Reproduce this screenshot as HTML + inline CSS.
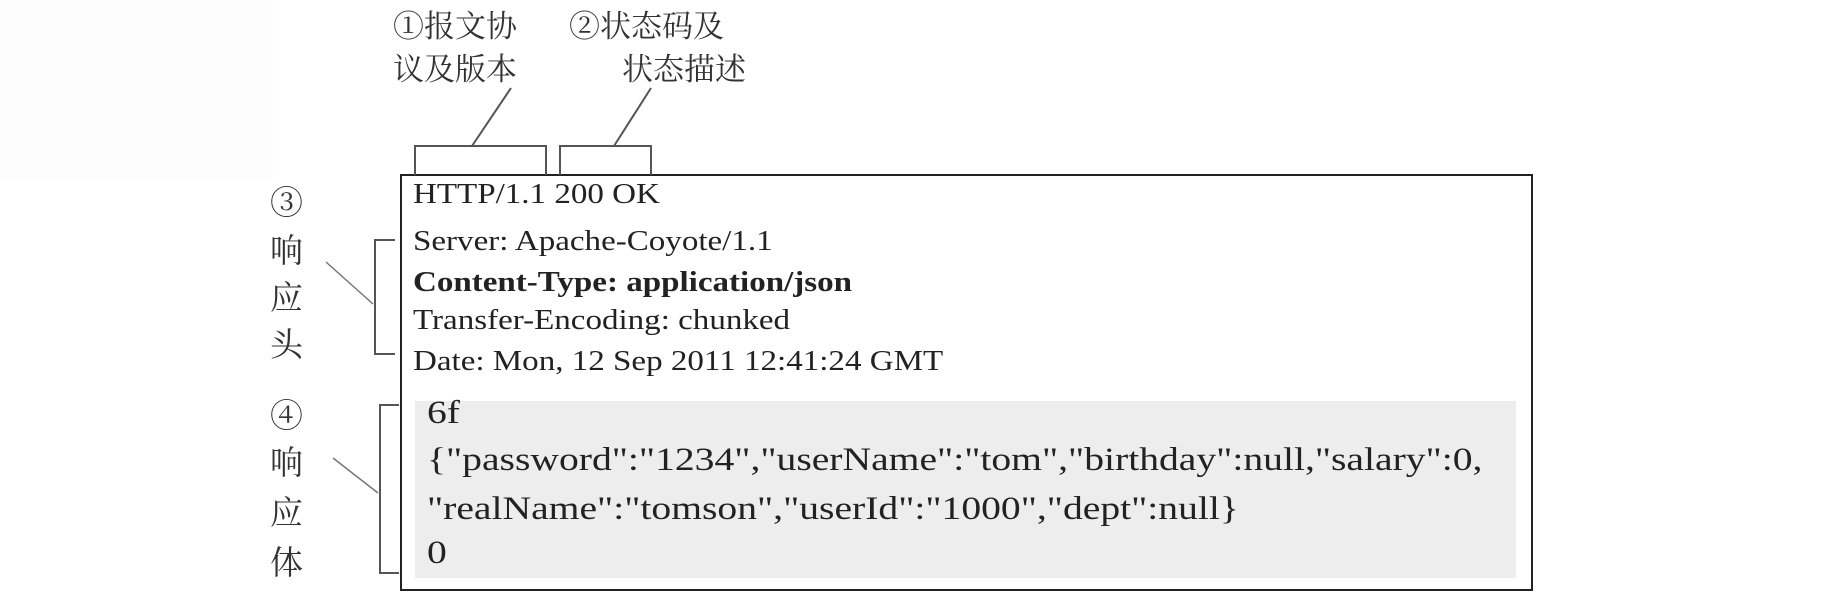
<!DOCTYPE html>
<html><head><meta charset="utf-8">
<style>
html,body{margin:0;padding:0;background:#fff;}
body{width:1842px;height:608px;position:relative;overflow:hidden;font-family:"Liberation Serif","Noto Serif CJK SC",serif;color:#222;}
.t{position:absolute;white-space:nowrap;transform-origin:0 50%;line-height:1;}
.h{font-size:28px;transform:scaleX(1.18);}
.b{font-size:33px;transform:scaleX(1.2);}
.c{font-size:31px;position:absolute;white-space:nowrap;line-height:1;font-family:"Noto Serif CJK SC","Noto Sans CJK SC",serif;color:#333;}
.l{font-size:33px;position:absolute;line-height:1;font-family:"Noto Serif CJK SC","Noto Sans CJK SC",serif;color:#333;}
</style></head><body>
<div style="position:absolute;left:0;top:0;width:273px;height:180px;background:#fdfdfd"></div>
<div style="position:absolute;left:400px;top:174px;width:1129px;height:413px;border:2px solid #222;"></div>
<div style="position:absolute;left:415px;top:401px;width:1101px;height:177px;background:#ededed;"></div>

<div class="t h" style="left:413px;top:181px">HTTP/1.1 200 OK</div>
<div class="t h" style="left:413px;top:228px">Server: Apache-Coyote/1.1</div>
<div class="t h" style="left:413px;top:269px;font-weight:bold">Content-Type: application/json</div>
<div class="t h" style="left:413px;top:307px">Transfer-Encoding: chunked</div>
<div class="t h" style="left:413px;top:348px">Date: Mon, 12 Sep 2011 12:41:24 GMT</div>

<div class="t b" style="left:427px;top:397px">6f</div>
<div class="t b" style="left:427px;top:444px">{"password":"1234","userName":"tom","birthday":null,"salary":0,</div>
<div class="t b" style="left:427px;top:493px">"realName":"tomson","userId":"1000","dept":null}</div>
<div class="t b" style="left:427px;top:537px">0</div>

<div class="c" style="left:393px;top:8px">①报文协</div>
<div class="c" style="left:393px;top:51px">议及版本</div>
<div class="c" style="left:569px;top:8px">②状态码及</div>
<div class="c" style="left:622px;top:51px">状态描述</div>

<div class="l" style="left:270px;top:184px">③</div>
<div class="l" style="left:270px;top:232px">响</div>
<div class="l" style="left:270px;top:279px">应</div>
<div class="l" style="left:270px;top:326px">头</div>
<div class="l" style="left:270px;top:397px">④</div>
<div class="l" style="left:270px;top:444px">响</div>
<div class="l" style="left:270px;top:494px">应</div>
<div class="l" style="left:270px;top:544px">体</div>

<svg width="1842" height="608" style="position:absolute;left:0;top:0" fill="none" stroke="#555" stroke-width="2">
<path d="M415 175V146H546V175"/>
<path d="M560 175V146H651V175"/>
<path d="M472 146L511 88"/>
<path d="M614 146L651 88"/>
<path d="M395 240H375V354H395"/>
<path d="M326 262L373 304" stroke-width="1.5" stroke="#777"/>
<path d="M399 405H380V573H399"/>
<path d="M333 458L378 493" stroke-width="1.5" stroke="#777"/>
</svg>
</body></html>
